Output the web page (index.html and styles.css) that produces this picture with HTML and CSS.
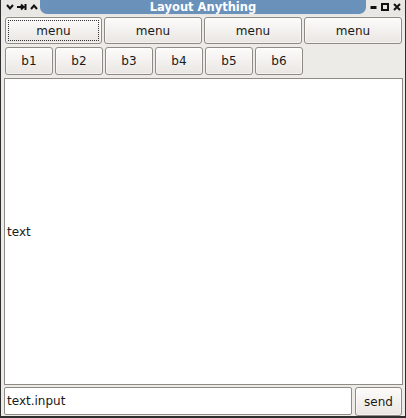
FILE: index.html
```html
<!DOCTYPE html>
<html>
<head>
<meta charset="utf-8">
<link rel="stylesheet" href="styles.css">
</head>
<body>
<div class="window">
  <div class="titlebar">
    <div class="tb-icons left">
      <svg width="8" height="8" viewBox="0 0 8 8"><path d="M1 2 L4 5.5 L7 2" fill="none" stroke="#111" stroke-width="2"/></svg>
      <svg width="10" height="8" viewBox="0 0 10 8"><path d="M0 4 H6 M4 1.5 L6.5 4 L4 6.5 M8.5 1 V7" fill="none" stroke="#111" stroke-width="2"/></svg>
      <svg width="8" height="8" viewBox="0 0 8 8"><path d="M1 6 L4 2.5 L7 6" fill="none" stroke="#111" stroke-width="2"/></svg>
    </div>
    <div class="tab">Layout Anything</div>
    <div class="tb-icons right">
      <svg width="7" height="8" viewBox="0 0 7 8"><rect x="0.5" y="3" width="6" height="3" fill="#111"/></svg>
      <svg width="8" height="8" viewBox="0 0 8 8"><rect x="1" y="1" width="6" height="6" fill="none" stroke="#111" stroke-width="2"/></svg>
      <svg width="8" height="8" viewBox="0 0 8 8"><path d="M1 1 L7 7 M7 1 L1 7" fill="none" stroke="#111" stroke-width="2"/></svg>
    </div>
  </div>
  <div class="content">
    <div class="menu-row">
      <button class="btn focused"><span class="focus">menu</span></button>
      <button class="btn">menu</button>
      <button class="btn">menu</button>
      <button class="btn">menu</button>
    </div>
    <div class="b-row">
      <button class="btn">b1</button>
      <button class="btn">b2</button>
      <button class="btn">b3</button>
      <button class="btn">b4</button>
      <button class="btn">b5</button>
      <button class="btn">b6</button>
    </div>
    <div class="textarea"><span>text</span></div>
    <div class="bottom-row">
      <div class="input">text.input</div>
      <button class="btn send">send</button>
    </div>
  </div>
</div>
</body>
</html>
```
FILE: styles.css
```css
html, body {
  margin: 0;
  padding: 0;
  background: #edebe8;
}
.window {
  width: 406px;
  height: 418px;
  box-sizing: border-box;
  border-left: 1px solid #2e2e2e;
  border-right: 1px solid #2e2e2e;
  border-bottom: 2px solid #2e2e2e;
  background: #edebe8;
  display: flex;
  flex-direction: column;
  font-family: "DejaVu Sans", Verdana, sans-serif;
  font-size: 12px;
  color: #1a1a1a;
}
.titlebar {
  height: 16px;
  display: flex;
  align-items: flex-start;
  background: #e9e7e3;
  flex: none;
}
.tb-icons {
  display: flex;
  align-items: center;
  height: 14px;
  gap: 3px;
}
.tb-icons.left {
  width: 39px;
  padding-left: 5px;
  box-sizing: border-box;
}
.tb-icons.right {
  padding-left: 4px;
  gap: 4px;
}
.tab {
  width: 326px;
  height: 14px;
  background: #6991ba;
  border-radius: 0 0 7px 7px;
  color: #fff;
  font-weight: bold;
  font-size: 11.5px;
  line-height: 14px;
  text-align: center;
}
.content {
  flex: 1;
  display: flex;
  flex-direction: column;
  padding: 1px 2px 1px 3px;
}
.btn {
  font-family: "DejaVu Sans", Verdana, sans-serif;
  font-size: 12px;
  color: #1a1a1a;
  border: 1px solid #8e8a84;
  border-radius: 3px;
  background: linear-gradient(#fdfcfb, #e9e6e2);
  padding: 0;
  margin: 0;
  box-shadow: inset 0 0 0 1px #ffffff80;
}
.menu-row {
  display: grid;
  grid-template-columns: 97px 98px 98px 98px;
  gap: 2px;
  padding-left: 1px;
  height: 27px;
}
.focused {
  position: relative;
}
.focus {
  position: absolute;
  inset: 2px;
  border: 1px dotted #333;
  display: flex;
  align-items: center;
  justify-content: center;
}
.b-row {
  display: grid;
  grid-template-columns: repeat(6, 48px);
  gap: 2px;
  padding-left: 1px;
  margin-top: 3px;
  height: 28px;
}
.textarea {
  flex: 1;
  margin-top: 3px;
  background: #fff;
  border: 1px solid #8f8c86;
  display: flex;
  align-items: center;
  padding-left: 2px;
}
.bottom-row {
  display: flex;
  gap: 3px;
  margin-top: 2px;
  height: 28px;
}
.input {
  width: 348px;
  box-sizing: border-box;
  background: #fff;
  border: 1px solid #8f8c86;
  border-radius: 2px;
  display: flex;
  align-items: center;
  padding-left: 2px;
  height: 28px;
}
.send {
  width: 47px;
  height: 29px;
}
```
